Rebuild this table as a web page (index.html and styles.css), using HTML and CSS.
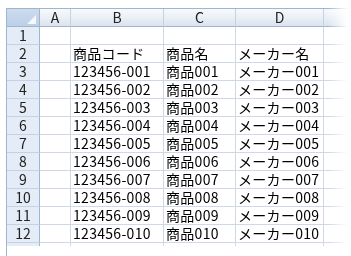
FILE: index.html
```html
<!DOCTYPE html>
<html lang="ja">
<head>
<meta charset="utf-8">
<link rel="stylesheet" href="styles.css">
</head>
<body>
<div class="sheet">
  <div class="hd corner"><span class="tri"></span></div>
  <div class="hd col">A</div>
  <div class="hd col">B</div>
  <div class="hd col">C</div>
  <div class="hd col">D</div>
  <div class="hd col last"></div>

  <div class="rh">1</div><div class="c"></div><div class="c"></div><div class="c"></div><div class="c"></div><div class="c last"></div>
  <div class="rh">2</div><div class="c"></div><div class="c">商品コード</div><div class="c">商品名</div><div class="c">メーカー名</div><div class="c last"></div>
  <div class="rh">3</div><div class="c"></div><div class="c">123456-001</div><div class="c">商品001</div><div class="c">メーカー001</div><div class="c last"></div>
  <div class="rh">4</div><div class="c"></div><div class="c">123456-002</div><div class="c">商品002</div><div class="c">メーカー002</div><div class="c last"></div>
  <div class="rh">5</div><div class="c"></div><div class="c">123456-003</div><div class="c">商品003</div><div class="c">メーカー003</div><div class="c last"></div>
  <div class="rh">6</div><div class="c"></div><div class="c">123456-004</div><div class="c">商品004</div><div class="c">メーカー004</div><div class="c last"></div>
  <div class="rh">7</div><div class="c"></div><div class="c">123456-005</div><div class="c">商品005</div><div class="c">メーカー005</div><div class="c last"></div>
  <div class="rh">8</div><div class="c"></div><div class="c">123456-006</div><div class="c">商品006</div><div class="c">メーカー006</div><div class="c last"></div>
  <div class="rh">9</div><div class="c"></div><div class="c">123456-007</div><div class="c">商品007</div><div class="c">メーカー007</div><div class="c last"></div>
  <div class="rh">10</div><div class="c"></div><div class="c">123456-008</div><div class="c">商品008</div><div class="c">メーカー008</div><div class="c last"></div>
  <div class="rh">11</div><div class="c"></div><div class="c">123456-009</div><div class="c">商品009</div><div class="c">メーカー009</div><div class="c last"></div>
  <div class="rh">12</div><div class="c"></div><div class="c">123456-010</div><div class="c">商品010</div><div class="c">メーカー010</div><div class="c last"></div>

  <div class="rh stub"></div><div class="c stub"></div><div class="c stub"></div><div class="c stub"></div><div class="c stub"></div><div class="c stub last"></div>
</div>
</body>
</html>
```

FILE: styles.css
```css
html, body {
  margin: 0;
  padding: 0;
  background: #ffffff;
}

.sheet {
  margin: 8px 0 0 6px;
  display: grid;
  grid-template-columns: 33px 31px 93px 72px 88px 24px;
  grid-auto-rows: 18px;
  width: max-content;
  border-top: 1px solid #9eb6ce;
  border-left: 1px solid #9eb6ce;
  font-family: "Noto Sans CJK JP", "Noto Sans", sans-serif;
  font-size: 14px;
  line-height: 17px;
  color: #000;
  -webkit-mask-image: linear-gradient(to right, #000 0, #000 322px, transparent 342px);
  mask-image: linear-gradient(to right, #000 0, #000 322px, transparent 342px);
}

.sheet > div {
  box-sizing: border-box;
  white-space: nowrap;
}

.hd {
  background: linear-gradient(to bottom, #f7f9fc 0%, #eaf0f6 50%, #dbe3ee 100%);
  border-right: 1px solid #c5d2e2;
  border-bottom: 1px solid #9eb6ce;
  text-align: center;
  color: #222;
}

.corner {
  position: relative;
  background: linear-gradient(to bottom, #cddbee 0%, #bccfe8 100%);
  border-right: 1px solid #9eb6ce;
}

.tri {
  position: absolute;
  right: 3px;
  bottom: 2px;
  width: 0;
  height: 0;
  border-left: 9px solid transparent;
  border-bottom: 9px solid #f4f8fc;
}

.rh {
  background: #e4ecf7;
  border-right: 1px solid #9eb6ce;
  border-bottom: 1px solid #c5d2e2;
  text-align: center;
  color: #222;
}

.c {
  border-right: 1px solid #d0d7e5;
  border-bottom: 1px solid #d0d7e5;
  padding-left: 2px;
  letter-spacing: 0.3px;
}

.stub {
  height: 3px;
  border-bottom: none;
  background: #ffffff;
}

.rh.stub {
  background: #e4ecf7;
}
```
